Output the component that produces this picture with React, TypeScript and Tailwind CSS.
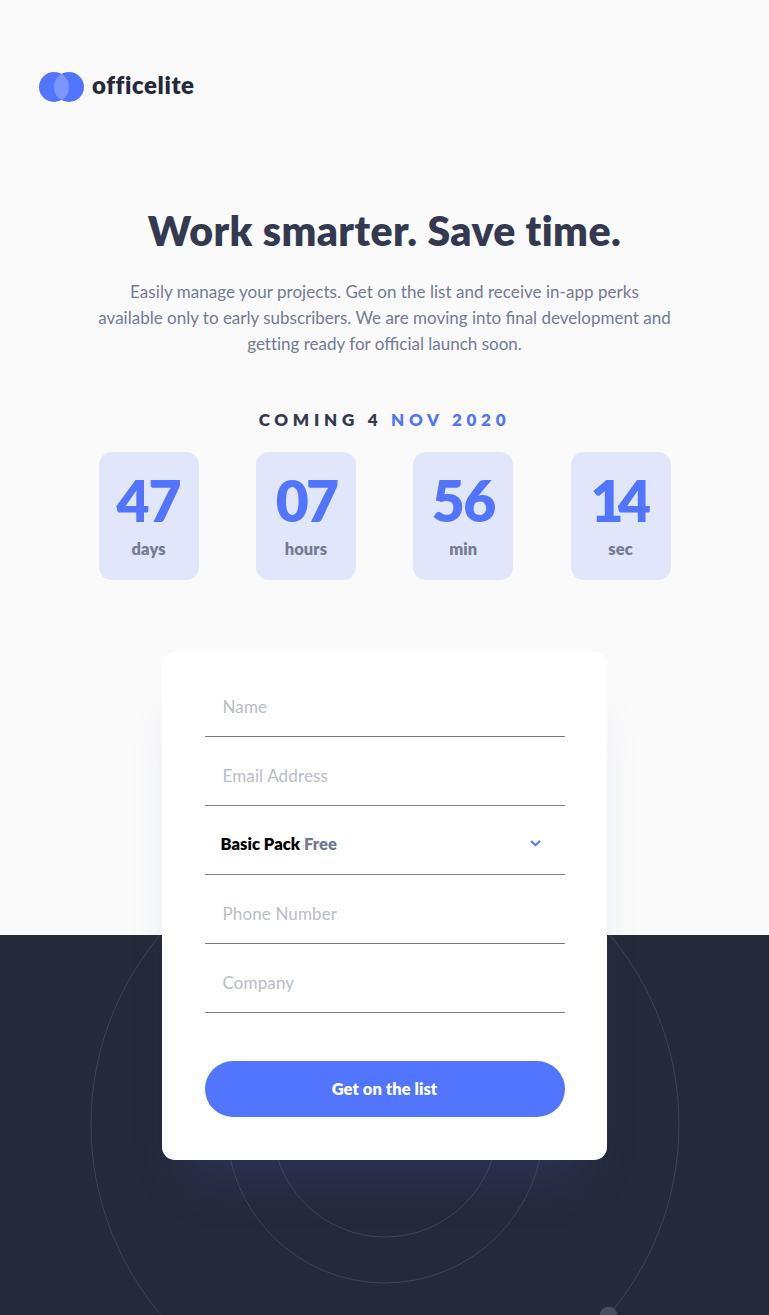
import React from 'react';

const counters = [
  { value: '47', label: 'days', spacing: 'tracking-[-1px]' },
  { value: '07', label: 'hours', spacing: 'tracking-[-3px]' },
  { value: '56', label: 'min', spacing: 'tracking-[-1.6px]' },
  { value: '14', label: 'sec', spacing: 'tracking-[-5.5px] pr-[5px]' },
];

function Logo() {
  return (
    <div className="flex h-[30px] items-center">
      <svg width="45" height="30" viewBox="0 0 45 30" className="shrink-0">
        <circle cx="15" cy="15" r="15" fill="#5175FF" />
        <circle cx="30" cy="15" r="15" fill="#5175FF" />
        <path d="M22.5 2a15 15 0 0 1 0 26a15 15 0 0 1 0-26Z" fill="#7C96FF" />
      </svg>
      <span className="mb-1 ml-2 text-[24px] font-extrabold leading-[30px] tracking-[0.6px] text-[#25293A]">
        officelite
      </span>
    </div>
  );
}

function Field({ placeholder }: { placeholder: string }) {
  return (
    <input
      type="text"
      placeholder={placeholder}
      className="block h-[69px] w-full border-b border-[#747B95] bg-transparent pt-[9px] pl-[18px] text-[17px] tracking-[0.13px] outline-none placeholder:text-[#B9BDCA]"
    />
  );
}

function Orbits() {
  return (
    <svg className="absolute inset-0" width="769" height="380" viewBox="0 935 769 380" fill="none">
      <g stroke="#FFFFFF" strokeOpacity="0.12">
        <circle cx="385" cy="1124.5" r="112.5" />
        <circle cx="385" cy="1124.5" r="158.5" />
        <circle cx="385" cy="1124.5" r="294" />
      </g>
      <circle cx="608.5" cy="1315.5" r="9" fill="#4A4D5C" />
    </svg>
  );
}

export default function App() {
  return (
    <div className="relative flex h-[1315px] w-[769px] flex-col overflow-hidden bg-[#FAFAFA] font-['Lato','Open_Sans',sans-serif]">
      <div className="absolute inset-x-0 bottom-0 h-[380px] bg-[#25293A]">
        <Orbits />
      </div>

      <header className="relative pt-[72px] pl-[39px]">
        <Logo />
      </header>

      <main className="relative flex flex-col items-center">
        <h1 className="mt-[103px] h-[52px] whitespace-nowrap text-[41px] font-extrabold leading-[52px] tracking-[0.42px] text-[#333950] [font-variant-ligatures:none]">
          Work smarter. Save time.
        </h1>

        <p className="mt-[22px] flex flex-col items-center whitespace-nowrap text-[17px] leading-[26px] text-[#747B95]">
          <span className="tracking-[0.04px]">Easily manage your projects. Get on the list and receive in-app perks</span>
          <span>available only to early subscribers. We are moving into final development and</span>
          <span>
            <span className="[font-variant-ligatures:none]">getting</span> ready for official launch soon.
          </span>
        </p>

        <h2 className="mt-[50px] h-[26px] whitespace-nowrap text-[17px] font-extrabold leading-[26px] tracking-[4.75px] text-[#333950]">
          COMING 4 <span className="text-[#5175FF]">NOV 2020</span>
        </h2>

        <div className="mt-[19px] ml-[0.2px] flex w-[572px] justify-between">
          {counters.map((c) => (
            <div key={c.label} className="flex h-[128px] w-[100px] flex-col items-center rounded-[13px] bg-[#E2E6FA]">
              <span className={`mt-[13px] h-[71px] text-[57px] font-extrabold leading-[70px] text-[#5175FF] ${c.spacing}`}>
                {c.value}
              </span>
              <span className="h-[26px] text-[16.5px] font-extrabold leading-[26px] tracking-[0.1px] text-[#747B95]">{c.label}</span>
            </div>
          ))}
        </div>

        <form className="mt-[72px] h-[508px] w-[445px] rounded-[13px] bg-white px-[42.5px] pt-4 shadow-[0_40px_50px_-25px_rgba(75,93,203,0.22)]">
          <Field placeholder="Name" />
          <Field placeholder="Email Address" />
          <div className="flex h-[69px] items-center border-b border-[#747B95] pt-[9px] pr-6 pl-4 text-[16.5px] font-extrabold tracking-[0.05px]">
            <span className="text-black">Basic Pack</span>
            <span className="ml-1 text-[#747B95]">Free</span>
            <svg className="mb-px ml-auto" width="11" height="8" viewBox="0 0 11 8" fill="none">
              <path d="M1 1l4.5 4.2L10 1" stroke="#5175FF" strokeWidth="2" />
            </svg>
          </div>
          <Field placeholder="Phone Number" />
          <Field placeholder="Company" />
          <button
            type="button"
            className="mt-12 h-14 w-full rounded-full bg-[#5175FF] pt-px text-[16.5px] font-extrabold tracking-[0.08px] text-white"
          >
            Get on the list
          </button>
        </form>
      </main>
    </div>
  );
}
